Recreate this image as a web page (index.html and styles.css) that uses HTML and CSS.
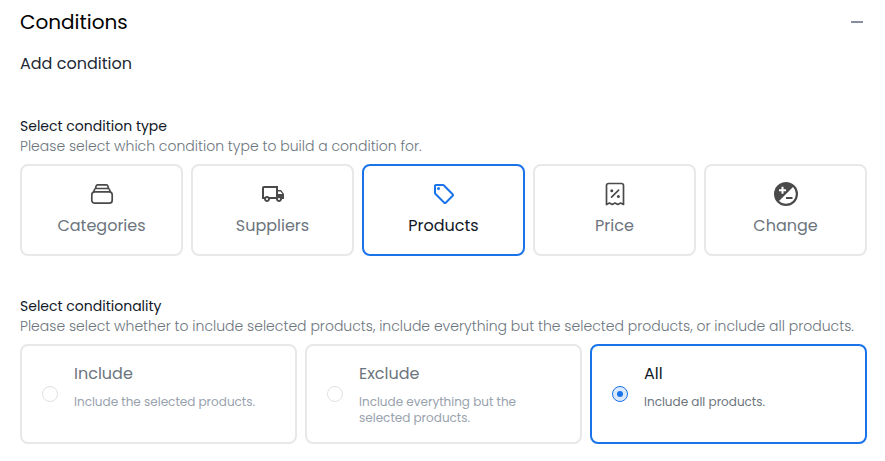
FILE: index.html
```html
<!DOCTYPE html>
<html lang="en">
<head>
<meta charset="utf-8">
<meta name="viewport" content="width=device-width, initial-scale=1">
<title>Conditions</title>
<link rel="stylesheet" href="styles.css">
</head>
<body>
<main class="panel">
  <header class="panel-header">
    <h1 class="panel-title">Conditions</h1>
    <button class="collapse" type="button" aria-label="Collapse"><span class="collapse-bar"></span></button>
  </header>
  <h2 class="subtitle">Add condition</h2>

  <form class="groups">
    <fieldset class="group">
      <legend class="group-title">Select condition type</legend>
      <p class="group-help">Please select which condition type to build a condition for.</p>
      <div class="types">
        <label class="card type">
          <input class="hidden-radio" type="radio" name="type" value="categories">
          <svg class="icon" viewBox="0 0 24 24" fill="none" stroke="currentColor" stroke-width="1.7" stroke-linejoin="round">
            <rect x="1.800" y="9.800" width="20.400" height="11.400" rx="3"/>
            <path d="M3.600 10.200 4.500 7.500Q4.800 6.500 5.800 6.500H18.200Q19.200 6.500 19.500 7.500L20.400 10.200M5.600 6.500 6 4.400Q6.300 2.800 7.700 2.800H16.300Q17.700 2.800 18 4.400L18.400 6.500"/>
          </svg>
          <span class="type-name">Categories</span>
        </label>
        <label class="card type">
          <input class="hidden-radio" type="radio" name="type" value="suppliers">
          <svg class="icon" viewBox="0 0 24 24" fill="currentColor">
            <path d="M20 8h-3V4H3c-1.100 0-2 .900-2 2v11h2c0 1.660 1.340 3 3 3s3-1.340 3-3h6c0 1.660 1.340 3 3 3s3-1.340 3-3h2v-5l-3-4zm-.500 1.500 1.960 2.500H17V9.500h2.500zM6 18c-.550 0-1-.450-1-1s.450-1 1-1 1 .450 1 1-.450 1-1 1zm2.220-3c-.550-.610-1.330-1-2.220-1s-1.670.390-2.220 1H3V6h12v9H8.220zM18 18c-.550 0-1-.450-1-1s.450-1 1-1 1 .450 1 1-.450 1-1 1z"/>
          </svg>
          <span class="type-name">Suppliers</span>
        </label>
        <label class="card type">
          <input class="hidden-radio" type="radio" name="type" value="products" checked>
          <svg class="icon" viewBox="0 0 24 24" fill="currentColor">
            <path d="m21.410 11.580-9-9C12.050 2.220 11.550 2 11 2H4c-1.100 0-2 .900-2 2v7c0 .550.220 1.050.590 1.420l9 9c.360.360.860.580 1.410.580s1.050-.220 1.410-.590l7-7c.370-.360.590-.860.590-1.410s-.230-1.060-.590-1.420zM13 20.010 4 11V4h7v-.010l9 9-7 7.020z"/>
            <circle cx="6.500" cy="6.500" r="1.500"/>
          </svg>
          <span class="type-name">Products</span>
        </label>
        <label class="card type">
          <input class="hidden-radio" type="radio" name="type" value="price">
          <svg class="icon" viewBox="0 0 24 24" fill="none" stroke="currentColor" stroke-width="1.700" stroke-linejoin="round">
            <path d="M3.500 22.500V3.600Q3.500 1.500 5.600 1.500H18.400Q20.500 1.500 20.500 3.600V22.500L17.600 21 14.800 22.500 12 21 9.200 22.500 6.400 21Z"/>
            <path d="M8.600 15.200 15.600 8.200" stroke-linecap="round"/>
            <circle cx="8.800" cy="8.800" r="1.500" fill="currentColor" stroke="none"/>
            <circle cx="15.400" cy="14.600" r="1.500" fill="currentColor" stroke="none"/>
          </svg>
          <span class="type-name">Price</span>
        </label>
        <label class="card type">
          <input class="hidden-radio" type="radio" name="type" value="change">
          <svg class="icon" viewBox="0 0 24 24">
            <circle cx="12" cy="12" r="12" fill="currentColor"/>
            <path d="M19 5A9.900 9.900 0 0 1 5 19Z" fill="#fff"/>
            <path d="M8.500 4.800v7M5 8.300h7" stroke="#fff" stroke-width="2"/>
            <path d="M12 16h6.500" stroke="currentColor" stroke-width="2"/>
          </svg>
          <span class="type-name">Change</span>
        </label>
      </div>
    </fieldset>

    <fieldset class="group">
      <legend class="group-title">Select conditionality</legend>
      <p class="group-help">Please select whether to include selected products, include everything but the selected products, or include all products.</p>
      <div class="options">
        <label class="card option">
          <input class="radio" type="radio" name="mode" value="include">
          <span class="option-text">
            <span class="option-name">Include</span>
            <span class="option-help">Include the selected products.</span>
          </span>
        </label>
        <label class="card option">
          <input class="radio" type="radio" name="mode" value="exclude">
          <span class="option-text">
            <span class="option-name">Exclude</span>
            <span class="option-help">Include everything but the selected products.</span>
          </span>
        </label>
        <label class="card option">
          <input class="radio" type="radio" name="mode" value="all" checked>
          <span class="option-text">
            <span class="option-name">All</span>
            <span class="option-help">Include all products.</span>
          </span>
        </label>
      </div>
    </fieldset>
  </form>
</main>
</body>
</html>
```
FILE: styles.css
```css
*,
*::before {
  box-sizing: border-box;
}

body {
  margin: 0;
  background: #fff;
  color: #212936;
  font-family: Poppins, Inter, "Open Sans", sans-serif;
}

.panel {
  padding: 8px 18px 16px 20px;
}

.panel-header {
  display: flex;
  align-items: center;
  justify-content: space-between;
}

.panel-title {
  margin: 0;
  color: #000;
  font-size: 20px;
  font-weight: 400;
  line-height: 28px;
}

.collapse {
  display: flex;
  align-items: center;
  justify-content: center;
  width: 20px;
  height: 20px;
  padding: 0;
  border: 0;
  background: none;
}

.collapse-bar {
  width: 12px;
  height: 2px;
  background: #868e9f;
}

.subtitle {
  margin: 16px 0 40px;
  font-size: 16px;
  font-weight: 400;
  line-height: 24px;
}

.groups {
  display: grid;
  gap: 40px;
}

.group {
  min-width: 0;
  margin: 0;
  padding: 0;
  border: 0;
}

.group-title {
  padding: 0;
  color: #111827;
  font-size: 14px;
  line-height: 20px;
}

.group-help {
  margin: 0 0 8px;
  color: #6c757d;
  font-size: 14px;
  font-weight: 300;
  line-height: 20px;
}

.types,
.options {
  display: grid;
  gap: 8px;
}

.types {
  grid-template-columns: repeat(5, minmax(0, 1fr));
}

.options {
  grid-template-columns: repeat(3, minmax(0, 1fr));
}

.card {
  border: 2px solid #e8e8e8;
  border-radius: 8px;
  color: #6c757d;
  cursor: pointer;
}

.card:has(:checked) {
  border-color: #1a73e8;
  color: #111827;
}

.type {
  display: flex;
  position: relative;
  flex-direction: column;
  align-items: center;
  gap: 8px;
  padding: 16px;
}

.hidden-radio {
  position: absolute;
  width: 1px;
  height: 1px;
  margin: 0;
  opacity: 0;
}

.icon {
  width: 24px;
  height: 24px;
  color: #4a4a4a;
}

.type :checked + .icon {
  color: #1a73e8;
}

.type-name,
.option-name {
  font-size: 16px;
  line-height: 24px;
}

.option {
  display: flex;
  align-items: center;
  gap: 16px;
  padding: 16px 20px;
}

.radio {
  flex: none;
  appearance: none;
  display: grid;
  place-items: center;
  width: 16px;
  height: 16px;
  margin: 0;
  border: 1px solid #e0e0e6;
  border-radius: 50%;
}

.radio:checked {
  border-color: #1a73e8;
  background: #dce8fc;
}

.radio:checked::before {
  content: "";
  width: 6px;
  height: 6px;
  border-radius: 50%;
  background: #1a73e8;
}

.option-text {
  display: flex;
  align-self: stretch;
  flex-direction: column;
  gap: 8px;
}

.option-help {
  color: #98a2ad;
  font-size: 12px;
  line-height: 16px;
}

.option:has(:checked) .option-help {
  color: #6c757d;
}
```
